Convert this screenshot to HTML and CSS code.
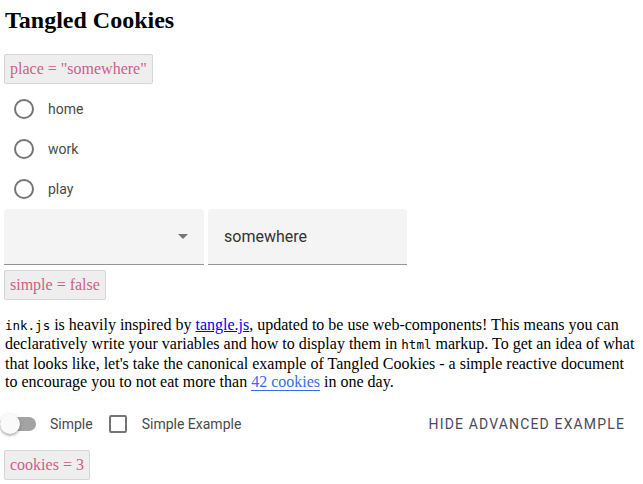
FILE: index.html
```html
<!DOCTYPE html>
<html>
<head>
<meta charset="utf-8">
<link rel="stylesheet" href="styles.css">
</head>
<body>
<div class="page">
  <h2 class="title">Tangled Cookies</h2>
  <div class="badge">place = "somewhere"</div>
  <div class="radios">
    <div class="radio-row"><span class="radio-wrap"><span class="radio"></span></span><span class="label">home</span></div>
    <div class="radio-row"><span class="radio-wrap"><span class="radio"></span></span><span class="label">work</span></div>
    <div class="radio-row"><span class="radio-wrap"><span class="radio"></span></span><span class="label">play</span></div>
  </div>
  <div class="fields">
    <div class="field select"><span class="arrow"></span></div>
    <div class="field text">somewhere</div>
  </div>
  <div class="badge">simple = false</div>
  <p class="copy"><code>ink.js</code> is heavily inspired by <a href="#" class="ext">tangle.js</a>, updated to be use web-components! This means you can declaratively write your variables and how to display them in <code>html</code> markup. To get an idea of what that looks like, let's take the canonical example of Tangled Cookies - a simple reactive document to encourage you to not eat more than <span class="tangle">42 cookies</span> in one day.</p>
  <div class="controls">
    <div class="switch-field">
      <span class="switch"><span class="track"></span><span class="thumb"></span></span>
      <span class="label">Simple</span>
    </div>
    <div class="check-field">
      <span class="check-wrap"><span class="check"></span></span>
      <span class="label">Simple Example</span>
    </div>
    <button class="text-btn">HIDE ADVANCED EXAMPLE</button>
  </div>
  <div class="badge">cookies = 3</div>
</div>
</body>
</html>
```
FILE: styles.css
```css
html, body {
  margin: 0;
  padding: 0;
  background: #ffffff;
}
body {
  font-family: "Liberation Serif", "Times New Roman", serif;
  font-size: 16px;
  color: #000;
}
.page {
  padding: 0 4px;
  overflow: hidden;
}
.title {
  font-size: 24px;
  font-weight: bold;
  margin: 6px 0 20px 1px;
  line-height: 28px;
}
.badge {
  display: block;
  width: fit-content;
  margin: 5px 0;
  padding: 5px;
  line-height: 18px;
  background: #eeeeee;
  border: 1px solid #d6d6d6;
  border-radius: 2px;
  color: #cc5f88;
  font-size: 16px;
}
.radios {
  display: flex;
  flex-direction: column;
}
.radio-row {
  display: flex;
  align-items: center;
  height: 40px;
}
.radio-wrap {
  width: 40px;
  height: 40px;
  display: flex;
  align-items: center;
  justify-content: center;
}
.radio {
  width: 16px;
  height: 16px;
  border: 2px solid #757575;
  border-radius: 50%;
}
.label {
  font-family: Roboto, "Noto Sans", sans-serif;
  font-size: 14px;
  color: #4a4a4a;
  padding-left: 4px;
}
.fields {
  display: flex;
  gap: 4px;
}
.field {
  width: 200px;
  height: 55px;
  background: #f4f4f4;
  border-bottom: 1px solid #949494;
  border-radius: 4px 4px 0 0;
  display: flex;
  align-items: center;
  box-sizing: content-box;
}
.select {
  justify-content: flex-end;
}
.arrow {
  width: 0;
  height: 0;
  border-left: 5px solid transparent;
  border-right: 5px solid transparent;
  border-top: 5px solid #757575;
  margin-right: 16px;
}
.text {
  width: 183px;
  padding-left: 16px;
  font-family: Roboto, "Noto Sans", sans-serif;
  font-size: 16px;
  color: #333;
}
.copy {
  margin: 16px 0 12px 0;
  line-height: 18.3px;
  padding-left: 1px;
}
code {
  font-family: "DejaVu Sans Mono", "Liberation Mono", monospace;
  font-size: 12.5px;
}
.ext {
  color: #0000ee;
  text-decoration: underline;
}
.tangle {
  color: #3d68f2;
  border-bottom: 1px solid #3d68f2;
}
.controls {
  display: flex;
  align-items: center;
  height: 42px;
  margin-left: -4px;
}
.switch-field {
  display: flex;
  align-items: center;
}
.switch {
  position: relative;
  width: 36px;
  height: 20px;
  margin-right: 10px;
  display: block;
}
.track {
  position: absolute;
  left: 0;
  top: 3px;
  width: 36px;
  height: 14px;
  border-radius: 7px;
  background: #a3a3a3;
}
.thumb {
  position: absolute;
  left: 0;
  top: 0;
  width: 20px;
  height: 20px;
  border-radius: 50%;
  background: #fafafa;
  box-shadow: 0 2px 2px rgba(0,0,0,0.2), 0 1px 4px rgba(0,0,0,0.15);
}
.check-field {
  display: flex;
  align-items: center;
  margin-left: 5px;
}
.check-wrap {
  width: 40px;
  height: 40px;
  display: flex;
  align-items: center;
  justify-content: center;
}
.check {
  width: 14px;
  height: 14px;
  border: 2px solid #757575;
  border-radius: 2px;
}
.text-btn {
  margin-left: auto;
  margin-right: 6px;
  background: none;
  border: none;
  padding: 0 8px;
  height: 36px;
  font-family: Roboto, "Noto Sans", sans-serif;
  font-size: 14px;
  font-weight: 400;
  letter-spacing: 1.15px;
  color: #4a4a5c;
}
```
